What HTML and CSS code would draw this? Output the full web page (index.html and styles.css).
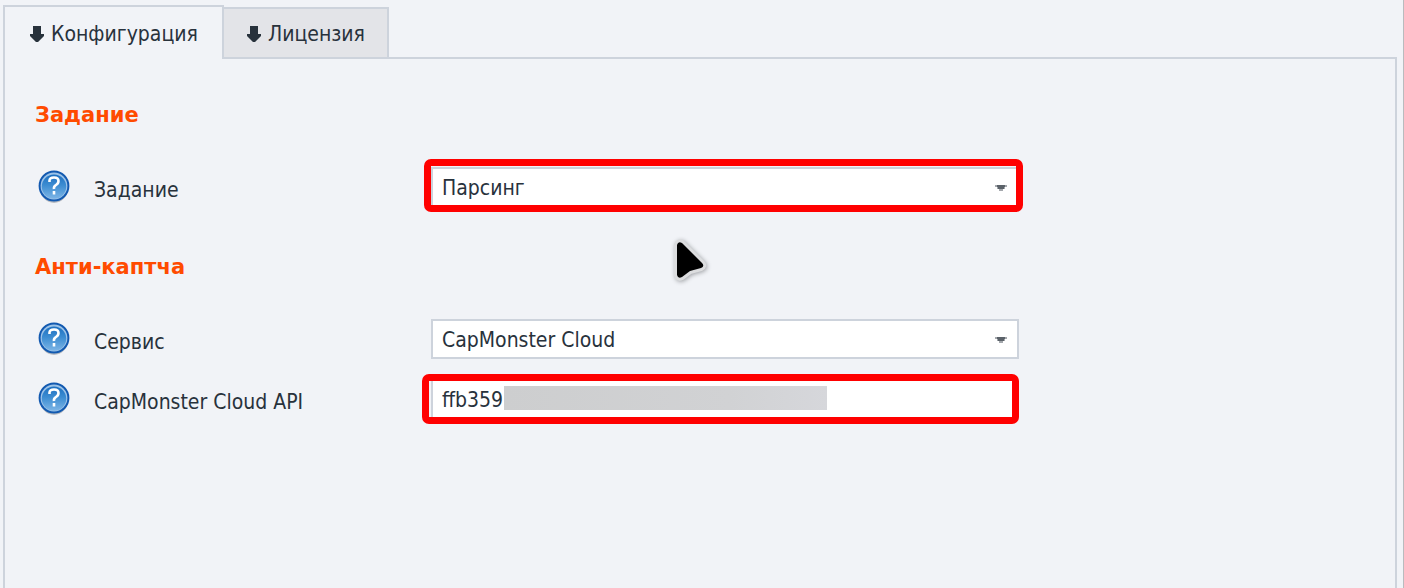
FILE: index.html
```html
<!DOCTYPE html>
<html lang="ru">
<head>
<meta charset="utf-8">
<title>Конфигурация</title>
<link rel="stylesheet" href="styles.css">
</head>
<body>
<svg class="defs" aria-hidden="true">
  <defs>
    <linearGradient id="ball" x1="0" y1="0" x2="0" y2="1">
      <stop offset="0" stop-color="#1c6fc0"/>
      <stop offset="0.45" stop-color="#3d8dd2"/>
      <stop offset="1" stop-color="#7db5e6"/>
    </linearGradient>
    <symbol id="help" viewBox="0 0 32 34">
      <ellipse cx="16" cy="18" rx="14" ry="15" fill="#b9bbc0"/>
      <circle cx="16" cy="16" r="15.4" fill="#1259b0"/>
      <circle cx="16" cy="16" r="13.4" fill="#9cc3e8"/>
      <circle cx="16" cy="16.6" r="12.2" fill="url(#ball)"/>
      <path d="M11.5 12V10.500Q11.500 7.500 16 7.500T20.500 11Q20.500 13.500 18 15T16 19" fill="none" stroke="#fff" stroke-width="2.600"/>
      <path d="M14.700 21h2.600v3.500h-2.600z" fill="#fff"/>
    </symbol>
    <symbol id="down" viewBox="0 0 16 16">
      <path d="M4 0h8v8h3v2l-6 6H7l-6-6V8h3z" fill="#28323c"/>
    </symbol>
    <symbol id="caret" viewBox="0 0 12 6">
      <path d="M0 0h12v2H10v2H8v2H4V4H2V2H0z" fill="#a4a8ad"/>
      <path d="M2 0h8v2H9v2H3V2H2z" fill="#5b6269"/>
    </symbol>
  </defs>
</svg>
<main class="window">
  <div class="tabs" role="tablist">
    <button class="tab tab-active" type="button" role="tab" aria-selected="true"><svg class="down"><use href="#down"/></svg>Конфигурация</button>
    <button class="tab" type="button" role="tab" aria-selected="false"><svg class="down"><use href="#down"/></svg>Лицензия</button>
  </div>
  <form class="panel">
    <section class="group">
      <h2 class="title">Задание</h2>
      <div class="row">
        <button class="help" type="button" aria-label="Справка"><svg><use href="#help"/></svg></button>
        <label class="label" for="task">Задание</label>
        <div class="field">
          <select class="control" id="task"><option>Парсинг</option></select>
          <svg class="caret" shape-rendering="crispEdges"><use href="#caret"/></svg>
          <span class="mark mark-task"></span>
          <svg class="pointer" viewBox="0 0 44 50" aria-hidden="true">
            <path d="M9 9v30q1 4 5 2l8-6 11-3q4-2 1-5L14 7q-4-2-5 2z" fill="#000" stroke="#dcdddf" stroke-width="6" stroke-linejoin="round"/>
            <path d="M9 9v30q1 4 5 2l8-6 11-3q4-2 1-5L14 7q-4-2-5 2z" fill="#000"/>
          </svg>
        </div>
      </div>
    </section>
    <section class="group">
      <h2 class="title">Анти-каптча</h2>
      <div class="row">
        <button class="help" type="button" aria-label="Справка"><svg><use href="#help"/></svg></button>
        <label class="label" for="service">Сервис</label>
        <div class="field">
          <select class="control" id="service"><option>CapMonster Cloud</option></select>
          <svg class="caret" shape-rendering="crispEdges"><use href="#caret"/></svg>
        </div>
      </div>
      <div class="row">
        <button class="help" type="button" aria-label="Справка"><svg><use href="#help"/></svg></button>
        <label class="label" for="key">CapMonster Cloud API</label>
        <div class="field">
          <input class="control" id="key" type="text" value="ffb359">
          <span class="redaction"></span>
          <span class="mark mark-key"></span>
        </div>
      </div>
    </section>
  </form>
</main>
</body>
</html>
```
FILE: styles.css
```css
* { box-sizing: border-box; }

body {
  margin: 0;
  background: #f1f3f7;
  color: #28323c;
  font: 21px/28px "DejaVu Sans Condensed", "Noto Sans", sans-serif;
}

.defs {
  position: absolute;
  width: 0;
  height: 0;
}

.window {
  display: flex;
  flex-direction: column;
  min-height: 100vh;
  padding: 5px 6px 0 3px;
  border-right: 1px solid #b9bbbe;
}

.tabs {
  display: flex;
  align-items: flex-end;
}

.tab {
  display: flex;
  align-items: center;
  gap: 6px;
  height: 52px;
  margin: 0 0 -2px -2px;
  padding: 2px 22px 0;
  border: 2px solid #cdd3dc;
  background: #e3e4e8;
  color: inherit;
  font: inherit;
}

.tab-active {
  position: relative;
  height: 54px;
  margin-left: 0;
  padding: 2px 24px 0;
  border-bottom: 0;
  background: #f1f3f7;
}

.down {
  width: 16px;
  height: 16px;
}

.panel {
  flex: 1;
  padding: 42px 30px 0;
  border: 2px solid #cdd3dc;
  border-bottom: 0;
}

.group { margin-bottom: 46px; }

.title {
  margin: 0 0 38px;
  color: #ff4b00;
  font: bold 21px/28px "DejaVu Sans", "Noto Sans", sans-serif;
}

.row {
  display: grid;
  grid-template-columns: 35px 337px minmax(0, 588px);
  column-gap: 12px;
  margin-bottom: 20px;
}

.help {
  width: 32px;
  height: 34px;
  margin: 3px;
  padding: 0;
  border: 0;
  background: none;
}

.help svg {
  display: block;
  width: 32px;
  height: 34px;
}

.label {
  padding: 9px 12px 0;
}

.field { position: relative; }

.control {
  display: block;
  appearance: none;
  width: 100%;
  height: 40px;
  padding: 2px 9px 0;
  border: 2px solid #cdd3dc;
  border-radius: 0;
  outline: 0;
  background: #fff;
  color: inherit;
  font: inherit;
}

.caret {
  position: absolute;
  top: 18px;
  right: 12px;
  width: 12px;
  height: 6px;
  pointer-events: none;
}

.mark {
  position: absolute;
  border: 7px solid #f00;
  border-radius: 7px;
  pointer-events: none;
}

.mark-task { inset: -8px -4px -5px -7px; }

.mark-key { inset: -5px 0 -5px -9px; }

.redaction {
  position: absolute;
  top: 7px;
  left: 73px;
  width: 323px;
  height: 24px;
  background: linear-gradient(90deg, #cdcecf, #d1d2d4 70%, #d6d7db);
}

.pointer {
  position: absolute;
  top: 69px;
  left: 237px;
  width: 44px;
  height: 50px;
  filter: drop-shadow(1px 1px 2px #a0a2a6);
  pointer-events: none;
}
```
